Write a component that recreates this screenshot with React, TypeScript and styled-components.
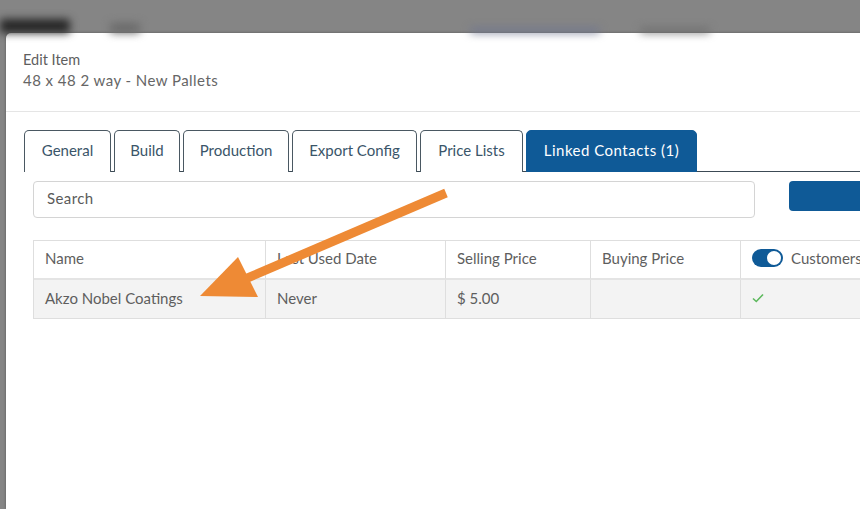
import React from "react";
import styled, { createGlobalStyle } from "styled-components";

const GlobalStyle = createGlobalStyle`
  html, body {
    margin: 0;
    padding: 0;
    background: #858585;
    overflow: hidden;
    font-family: Lato, "Open Sans", sans-serif;
  }
`;

const Page = styled.div`
  position: relative;
  width: 860px;
  height: 509px;
  overflow: hidden;
`;

const Backdrop = styled.div`
  display: flex;
  align-items: flex-end;
  gap: 40px;
  height: 33px;
  filter: blur(4px);
`;

const Blob = styled.div<{ $w: number; $color: string; $h?: number }>`
  width: ${(p) => p.$w}px;
  height: ${(p) => p.$h ?? 8}px;
  background: ${(p) => p.$color};
  border-radius: 3px;
`;

const Modal = styled.div`
  margin-left: 6px;
  width: 1000px;
  height: 476px;
  background: #fff;
  border-top-left-radius: 5px;
  box-shadow: 0 0 3px rgba(0, 0, 0, 0.35);
`;

const Header = styled.div`
  padding: 17px 17px 21px;
  border-bottom: 1px solid #e5e5e5;
  color: #5e5e5e;
  font-size: 14.5px;
  line-height: 20px;
`;

const Subtitle = styled.div`
  color: #666;
  font-size: 15px;
  letter-spacing: 0.45px;
`;

const Body = styled.div`
  padding: 18px 0 0 18px;
`;

const TabBar = styled.div`
  display: flex;
  align-items: flex-end;
  gap: 3px;
  border-bottom: 1px solid #3c4a55;
`;

const Tab = styled.div<{ $active?: boolean; $w: number }>`
  width: ${(p) => p.$w}px;
  height: 42px;
  box-sizing: border-box;
  padding-bottom: 3px;
  margin-bottom: -1px;
  display: flex;
  align-items: center;
  justify-content: center;
  font-size: 15px;
  letter-spacing: ${(p) => (p.$active ? "0.5px" : "0")};
  color: ${(p) => (p.$active ? "#fff" : "#3a5569")};
  background: ${(p) => (p.$active ? "#0f5a97" : "#fff")};
  border: 1px solid ${(p) => (p.$active ? "#0f5a97" : "#4a5862")};
  border-bottom: ${(p) => (p.$active ? "1px solid #0f5a97" : "none")};
  border-radius: 5px 5px 0 0;
`;

const Content = styled.div`
  padding: 9px 0 0 9px;
`;

const SearchRow = styled.div`
  display: flex;
  align-items: flex-start;
  gap: 34px;
`;

const SearchInput = styled.div`
  width: 722px;
  height: 37px;
  box-sizing: border-box;
  border: 1px solid #d4d4d4;
  border-radius: 4px;
  padding: 0 13px 3px;
  display: flex;
  align-items: center;
  font-size: 15px;
  letter-spacing: 0.4px;
  color: #5a5a5a;
`;

const BlueButton = styled.div`
  width: 120px;
  height: 30px;
  background: #0f5a97;
  border-radius: 4px;
`;

const Table = styled.div`
  margin-top: 22px;
  display: grid;
  grid-template-columns: 232px 180px 145px 150px 200px;
  border-top: 1px solid #dedede;
  border-left: 1px solid #dedede;
  font-size: 15px;
  color: #5e5e5e;
`;

const Cell = styled.div<{ $head?: boolean }>`
  height: 39px;
  box-sizing: border-box;
  padding: 0 11px 3px;
  display: flex;
  align-items: center;
  gap: 8px;
  white-space: nowrap;
  background: ${(p) => (p.$head ? "#fff" : "#f3f3f3")};
  border-right: 1px solid #dedede;
  border-bottom: ${(p) => (p.$head ? "2px solid #e4e4e4" : "1px solid #dedede")};
`;

const Toggle = styled.div`
  width: 31px;
  height: 18px;
  border-radius: 9px;
  background: #0f5a97;
  display: flex;
  justify-content: flex-end;
  align-items: center;
  padding: 0 2px;
  box-sizing: border-box;
  flex-shrink: 0;
`;

const Knob = styled.div`
  width: 14px;
  height: 14px;
  border-radius: 50%;
  background: #fff;
`;

const Arrow = styled.svg`
  position: absolute;
  left: 0;
  top: 0;
  pointer-events: none;
`;

const tabs: [string, number][] = [
  ["General", 87],
  ["Build", 66],
  ["Production", 106],
  ["Export Config", 125],
  ["Price Lists", 103],
];

export default function App() {
  return (
    <>
      <GlobalStyle />
      <Page>
        <Backdrop>
          <Blob $w={70} $color="#262626" $h={14} />
          <Blob $w={30} $color="#6a6a6a" $h={10} />
          <div style={{ flex: "0 0 250px" }} />
          <Blob $w={130} $color="#6f7590" $h={5} />
          <Blob $w={70} $color="#6c6c6c" $h={5} />
        </Backdrop>
        <Modal>
          <Header>
            <div>Edit Item</div>
            <Subtitle>48 x 48 2 way - New Pallets</Subtitle>
          </Header>
          <Body>
            <TabBar>
              {tabs.map(([t, w]) => (
                <Tab key={t} $w={w}>
                  {t}
                </Tab>
              ))}
              <Tab $active $w={171}>
                Linked Contacts (1)
              </Tab>
            </TabBar>
            <Content>
              <SearchRow>
                <SearchInput>Search</SearchInput>
                <BlueButton />
              </SearchRow>
              <Table>
                <Cell $head>Name</Cell>
                <Cell $head>Last Used Date</Cell>
                <Cell $head>Selling Price</Cell>
                <Cell $head>Buying Price</Cell>
                <Cell $head>
                  <Toggle>
                    <Knob />
                  </Toggle>
                  Customers
                </Cell>
                <Cell>Akzo Nobel Coatings</Cell>
                <Cell>Never</Cell>
                <Cell>$ 5.00</Cell>
                <Cell />
                <Cell>
                  <svg width="12" height="10" viewBox="0 0 12 10">
                    <path d="M1 5.5 L4.3 8.5 L11 1.5" fill="none" stroke="#5cb85c" strokeWidth="1.6" />
                  </svg>
                </Cell>
              </Table>
            </Content>
          </Body>
        </Modal>
        <Arrow width="860" height="509" viewBox="0 0 860 509">
          <line x1="446" y1="193" x2="238" y2="282" stroke="#ee8a35" strokeWidth="9" strokeLinecap="butt" />
          <polygon points="200,296 238,257 258,297" fill="#ee8a35" />
        </Arrow>
      </Page>
    </>
  );
}
